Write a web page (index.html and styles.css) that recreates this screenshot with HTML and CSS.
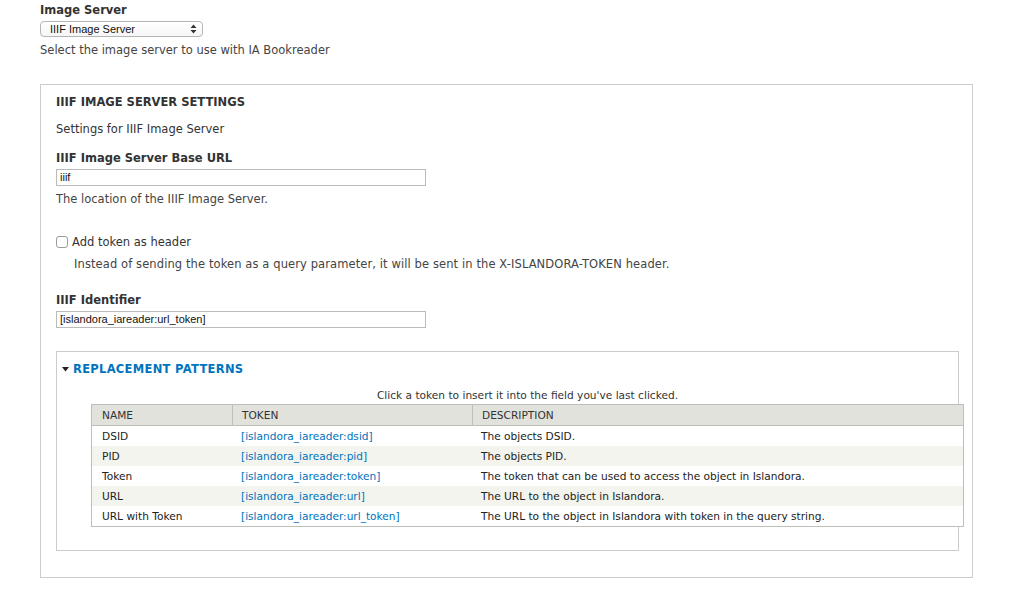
FILE: index.html
```html
<!DOCTYPE html>
<html>
<head>
<meta charset="utf-8">
<link rel="stylesheet" href="styles.css">
</head>
<body>
<div class="page">
  <div class="item">
    <div class="label">Image Server</div>
    <div class="select">
      <span>IIIF Image Server</span>
      <svg width="7" height="10" viewBox="0 0 7 10"><path d="M3.5 0.5 L6.5 4 L0.5 4 Z M0.5 6 L6.5 6 L3.5 9.5 Z" fill="#333"/></svg>
    </div>
    <div class="desc">Select the image server to use with IA Bookreader</div>
  </div>

  <div class="fieldset">
    <div class="legend">IIIF IMAGE SERVER SETTINGS</div>
    <div class="intro">Settings for IIIF Image Server</div>

    <div class="label l-base">IIIF Image Server Base URL</div>
    <div class="input">iiif</div>
    <div class="desc">The location of the IIIF Image Server.</div>

    <div class="check-row">
      <span class="checkbox"></span>
      <span class="check-label">Add token as header</span>
    </div>
    <div class="desc check-desc">Instead of sending the token as a query parameter, it will be sent in the X-ISLANDORA-TOKEN header.</div>

    <div class="label l-ident">IIIF Identifier</div>
    <div class="input">[islandora_iareader:url_token]</div>

    <div class="inner">
      <div class="inner-legend">
        <svg width="7" height="5" viewBox="0 0 7 5"><path d="M0 0 L7 0 L3.5 4.5 Z" fill="#222"/></svg>
        <span>REPLACEMENT PATTERNS</span>
      </div>
      <div class="tokens">
        <div class="hint">Click a token to insert it into the field you've last clicked.</div>
        <table>
          <thead>
            <tr><th class="c1">NAME</th><th class="c2">TOKEN</th><th class="c3">DESCRIPTION</th></tr>
          </thead>
          <tbody>
            <tr><td>DSID</td><td><a>[islandora_iareader:dsid]</a></td><td>The objects DSID.</td></tr>
            <tr class="even"><td>PID</td><td><a>[islandora_iareader:pid]</a></td><td>The objects PID.</td></tr>
            <tr><td>Token</td><td><a>[islandora_iareader:token]</a></td><td>The token that can be used to access the object in Islandora.</td></tr>
            <tr class="even"><td>URL</td><td><a>[islandora_iareader:url]</a></td><td>The URL to the object in Islandora.</td></tr>
            <tr><td>URL with Token</td><td><a>[islandora_iareader:url_token]</a></td><td>The URL to the object in Islandora with token in the query string.</td></tr>
          </tbody>
        </table>
      </div>
    </div>
  </div>
</div>
</body>
</html>
```

FILE: styles.css
```css
* { box-sizing: border-box; }
html, body { margin: 0; padding: 0; background: #fff; }
body {
  font-family: "DejaVu Sans", Verdana, sans-serif;
  font-size: 11.5px;
  color: #333;
}
.page {
  padding: 0 40px;
  width: 1013px;
}
.label {
  font-weight: bold;
  line-height: 20px;
  color: #333;
}
.select {
  margin-top: 1px;
  width: 163px;
  height: 16px;
  border: 1px solid #b5b5b5;
  border-radius: 4px;
  display: flex;
  align-items: center;
  justify-content: space-between;
  padding: 0 5px 0 9px;
  font-family: "Liberation Sans", Arial, sans-serif;
  font-size: 11px;
  color: #111;
  background: linear-gradient(#fff, #f6f6f6);
}
.desc {
  margin-top: 3px;
  line-height: 20px;
  color: #444;
}
.fieldset {
  margin-top: 24px;
  width: 933px;
  border: 1px solid #ccc;
  padding: 7px 13px 26px 15px;
}
.legend {
  font-weight: bold;
  line-height: 20px;
}
.intro {
  margin-top: 7px;
  line-height: 20px;
}
.l-base { margin-top: 9px; }
.input {
  margin-top: 1px;
  width: 370px;
  height: 17px;
  border: 1px solid #bbb;
  padding: 0 3px;
  font-family: "Liberation Sans", Arial, sans-serif;
  font-size: 11px;
  line-height: 15px;
  color: #111;
}
.check-row {
  margin-top: 23px;
  display: flex;
  align-items: center;
  line-height: 20px;
}
.checkbox {
  width: 12px;
  height: 12px;
  border: 1px solid #9a9a9a;
  border-radius: 3px;
  margin-right: 4px;
  background: #fff;
}
.check-desc {
  margin-top: 2px;
  padding-left: 18px;
  letter-spacing: 0.1px;
}
.l-ident { margin-top: 16px; }
.inner {
  margin-top: 23px;
  border: 1px solid #ccc;
  padding: 7px 0 23px 5px;
}
.inner-legend {
  display: flex;
  align-items: center;
  gap: 4px;
  line-height: 20px;
  font-weight: bold;
  color: #0074bd;
  letter-spacing: 0.3px;
}
.tokens {
  margin-top: 7px;
  margin-left: 29px;
  width: 873px;
  font-size: 10.6px;
}
.hint {
  text-align: center;
  line-height: 18px;
}
table {
  width: 873px;
  border-collapse: separate;
  border-spacing: 0;
  border: 1px solid #bebfb9;
  background: #fff;
}
th {
  background: #e1e2dc;
  font-weight: normal;
  text-align: left;
  height: 21px;
  padding: 0 9px;
  border-bottom: 1px solid #bebfb9;
  border-left: 1px solid #bebfb9;
}
th.c1 { width: 140px; padding-left: 10px; border-left: none; }
th.c2 { width: 240px; }
td {
  height: 20px;
  padding: 0 9px;
  color: #222;
  background: #fff;
}
td:first-child { padding-left: 10px; }
tr.even td { background: #f3f4ee; }
a { color: #0074bd; }
```
